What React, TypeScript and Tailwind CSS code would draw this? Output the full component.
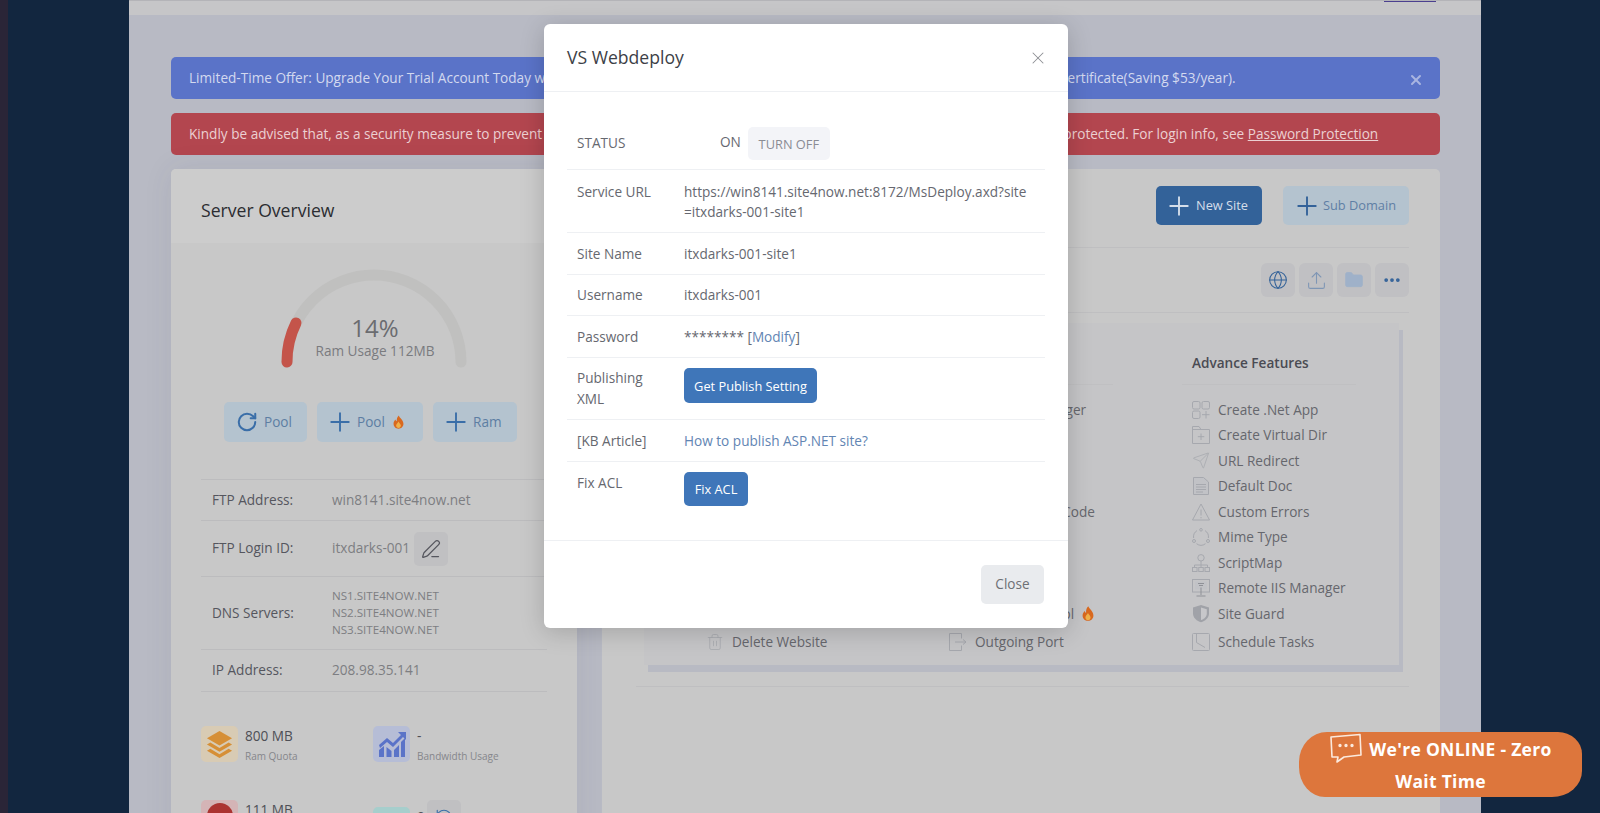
import React from 'react';
import { Globe, RotateCw, Plus, X, Send, Trash2, PenLine, Settings, Database, Lock, Cloud, Code, HardDrive, Link, Key, Archive, List, Clock, Upload, MoreHorizontal, Folder } from 'lucide-react';

const Flame = ({ className = '' }: { className?: string }) => (
  <svg viewBox="0 0 12 15" className={className}>
    <path d="M6.3 0.3C6.8 2.6 11.4 5 11.4 9.4 11.4 12.6 9 14.8 6 14.8 3 14.8 0.6 12.6 0.6 9.4 0.6 7.4 1.7 5.9 2.8 4.9 3 6 3.4 6.6 4.1 6.8 3.9 4.2 4.6 1.8 6.3 0.3Z" fill="#d9691f" />
    <path d="M6 7C6.4 8.4 8.6 9.6 8.6 11.4 8.6 13 7.4 14 6 14 4.6 14 3.4 13 3.4 11.4 3.4 9.6 5.4 8.6 6 7Z" fill="#efb24a" />
  </svg>
);

const S = ({ children }: { children: React.ReactNode }) => (
  <svg viewBox="0 0 18 18" className="h-[18px] w-[18px]" fill="none" stroke="currentColor" strokeWidth="1">
    {children}
  </svg>
);

const CreateApp = () => (
  <S>
    <rect x="0.5" y="0.5" width="7.5" height="7.5" rx="1.5" />
    <rect x="10" y="0.5" width="7.500" height="7.5" rx="1.5" />
    <rect x="0.5" y="10" width="7.5" height="7.500" rx="1.5" />
    <path d="M14 10v7.500M10 13.700h7.500" />
  </S>
);
const VirtualDir = () => (
  <S>
    <path d="M0.5 17.500V0.500H7L9 3.500H17.500V17.500Z" />
    <path d="M0.500 3.500H9M9 7.500v6.500M5.800 10.700h6.500" />
  </S>
);
const Redirect = () => <Send size={21} strokeWidth={1} />;
const Doc = () => (
  <S>
    <path d="M1.500 0.500H11.500L16.500 5V17.500H1.500Z" fill="#c1c2c6" />
    <path d="M4 7.500H14M4 10H14M4 12.500H14M4 15H11" />
  </S>
);
const Warn = () => (
  <S>
    <path d="M9 1 17.500 17H0.500Z" />
    <path d="M9 6.500v6M9 14v1.300" />
  </S>
);
const Mime = () => (
  <S>
    <path d="M5 2.600A7.500 7.500 0 0 0 1.600 10M13 2.600A7.500 7.500 0 0 1 16.400 10M4.500 15.700A7.500 7.500 0 0 0 13.500 15.700" />
    <circle cx="9" cy="1.800" r="1.300" />
    <circle cx="2" cy="13" r="1.500" />
    <circle cx="16" cy="13" r="1.500" />
  </S>
);
const ScriptMap = () => (
  <S>
    <circle cx="9" cy="3.800" r="3.200" />
    <path d="M9 7v4M2.500 13.500V11H15.500V13.500M9 11v2.500" />
    <rect x="0.500" y="13.500" width="4.500" height="4" />
    <rect x="6.750" y="13.500" width="4.500" height="4" />
    <rect x="13" y="13.500" width="4.500" height="4" />
  </S>
);
const Remote = () => (
  <S>
    <rect x="0.500" y="0.500" width="17" height="12.500" />
    <path d="M3 2.500H15V10.500H3Z" fill="#c1c2c6" stroke="none" />
    <path d="M6 4.500H12M7 6.500H11M9 8.500V13M9 13v3M4.500 17H13.500" stroke="#8f9197" />
  </S>
);
const Guard = () => (
  <svg viewBox="0 0 18 18" className="h-[19px] w-[18px]">
    <path d="M9 0.500 17 3V9C17 13.500 13 16.500 9 17.800 5 16.500 1 13.500 1 9V3Z" fill="#a0a2a8" />
    <path d="M9 3 14.800 4.800V9C14.800 12.300 12 14.600 9 15.600Z" fill="#c7c7ca" />
  </svg>
);
const Schedule = () => (
  <S>
    <rect x="0.500" y="0.500" width="17" height="17" rx="1" />
    <path d="M4.500 0.500V9.500L13 14.500" />
  </S>
);
const Outgoing = () => (
  <S>
    <path d="M12.500 5.500V0.500H0.500V17.500H12.500V12.500M6 9H17M14 6.500 17 9 14 11.500" />
  </S>
);
const Trash = () => <Trash2 size={22} strokeWidth={1} />;

const ActionButton = ({ icon, label, flame, className = '' }: { icon: React.ReactNode; label: string; flame?: boolean; className?: string }) => (
  <div className={`flex h-10 items-center rounded-[5px] bg-[#b4c3cf] text-[13.6px] text-[#5d7ea3] ${className}`}>
    {icon}
    <span>{label}</span>
    {flame && <Flame className="ml-[6px] h-[14px] w-[11px]" />}
  </div>
);

const InfoRow = ({ label, children, className = '' }: { label: string; children: React.ReactNode; className?: string }) => (
  <div className={`flex items-center border-b border-[#bcbcbe] pl-[11px] text-[13.6px] ${className}`}>
    <span className="w-[120px] shrink-0 text-[#55565e]">{label}</span>
    <div className="text-[#7d7e82]">{children}</div>
  </div>
);

const Stat = ({ icon, bg, value, label, action }: { icon: React.ReactNode; bg: string; value: string; label: string; action?: boolean }) => (
  <div className="flex w-[172px] gap-[7px]">
    <div className={`flex h-[36px] w-[37px] shrink-0 items-center justify-center rounded-[5px] ${bg}`}>{icon}</div>
    <div className="flex flex-col">
      <div className="flex h-[19px] items-center gap-[2px]">
        <span className="text-[13.6px] leading-[19px] text-[#4e4f56]">{value}</span>
        {action && (
          <span className="flex h-[34px] w-[34px] items-center justify-center rounded-[5px] bg-[#c0c0c2] text-[#3a6ea8]">
            <RotateCw size={18} strokeWidth={1.5} className="-scale-x-100" />
          </span>
        )}
      </div>
      <span className="mt-[3px] text-[10px] leading-[16px] text-[#85868b]">{label}</span>
    </div>
  </div>
);

const Feature = ({ icon, label, flame }: { icon: React.ReactNode; label: string; flame?: boolean }) => (
  <div className="flex h-[25.5px] items-center gap-[8px] pl-[10px] text-[13.6px] text-[#66676d]">
    <span className="flex h-[18px] w-[18px] shrink-0 items-center justify-center text-[#a6a8ae]">{icon}</span>
    <span className="whitespace-nowrap">{label}</span>
    {flame && <Flame className="h-[15px] w-[12px]" />}
  </div>
);

const Column = ({ title, items, w }: { title: string; items: { i: React.ReactNode; t: string; f?: boolean }[]; w: string }) => (
  <div className={`${w} shrink-0`}>
    <div className="w-[174px] border-b border-[#c0c0c2] pb-[11px] pl-[10px] text-[13.6px] font-semibold leading-5 text-[#4a4b53]">{title}</div>
    <div className="mt-[12px]">
      {items.slice(0, 9).map((x) => (
        <Feature key={x.t} icon={x.i} label={x.t} flame={x.f} />
      ))}
      <div className="mt-[3px]">
        <Feature icon={items[9].i} label={items[9].t} />
      </div>
    </div>
  </div>
);

const Ico = (C: React.ComponentType<any>) => <C size={18} strokeWidth={1} />;

const ModalRow = ({ label, children, className = '' }: { label: React.ReactNode; children: React.ReactNode; className?: string }) => (
  <div className={`flex border-b border-[#eef0f3] text-[13.6px] leading-5 ${className}`}>
    <div className="w-[117px] shrink-0 pl-[10px] pr-[30px] text-[#66686f]">{label}</div>
    <div className="min-w-0 flex-1 text-[#666870]">{children}</div>
  </div>
);

export default function App() {
  return (
    <div className="relative flex h-[813px] w-[1600px] overflow-hidden bg-[#12263f] [font-family:'Open_Sans',sans-serif]">
      <div className="w-2 shrink-0 bg-[#2a2537]" />
      <div className="w-[121px] shrink-0" />
      <main className="w-[1352px] shrink-0 bg-[#b8bac4]">
        <div className="flex h-[15px] justify-end border-t border-[#b4b4b8] bg-[#c6c6c8] pr-[45px]">
          <div className="h-px w-[52px] bg-[#4b3f8f]" />
        </div>
        <div className="pl-[42px] pr-[41px] pt-[42px]">
          <div className="relative flex h-[42px] items-center rounded-[5px] bg-[#5a73c8] px-[18px] text-[13.6px] text-[#d3d9ef]">
            Limited-Time Offer: Upgrade Your Trial Account Today with a 50% Discount on Annual Plans, and Get a Free .COM Domain and a Free SSL Certificate(Saving $53/year).
            <X size={16} strokeWidth={3} className="absolute right-[16px] top-[15px] text-[#a9b5e0]" />
          </div>
          <div className="mt-[14px] flex h-[42px] items-center rounded-[5px] bg-[#b3464f] px-[18px] text-[13.6px] text-[#ecd0d2]">
            <span>
              Kindly be advised that, as a security measure to prevent unauthorized access, the site under your newly created account, are all password protected. For login info, see <span className="underline">Password Protection</span>
            </span>
          </div>
          <div className="mt-[14px] flex gap-[25px]">
            <section className="h-[700px] w-[406px] shrink-0 rounded-[5px] bg-[#c8c8c8] shadow-[0_0_30px_rgba(60,60,90,0.08)]">
              <div className="flex h-[74px] items-center rounded-t-[5px] bg-[#cccccc] pl-[30px] pt-[8px] text-[17.6px] text-[#2b2c31]">Server Overview</div>
              <div className="relative h-[220px]">
                <svg viewBox="0 0 196 110" className="absolute left-[105px] top-[20px] h-[110px] w-[196px]">
                  <path d="M11 99A87 87 0 0 1 185 99" fill="none" stroke="#c0c0bf" strokeWidth="11" strokeLinecap="round" />
                  <path d="M11 99A87 87 0 0 1 20 60" fill="none" stroke="#c4544a" strokeWidth="11" strokeLinecap="round" />
                </svg>
                <div className="absolute left-0 top-[71px] w-[406px] pl-[2px] text-center">
                  <div className="text-[24px] leading-[27px] text-[#6b6c70]">14%</div>
                  <div className="text-[13.6px] leading-[20px] text-[#7a7b7f]">Ram Usage 112MB</div>
                </div>
                <div className="absolute left-[53px] top-[159px] flex gap-[10px]">
                  <ActionButton className="w-[83px] gap-[6px] pl-[12px]" icon={<RotateCw size={22} strokeWidth={2.2} className="text-[#3a6ea8]" />} label="Pool" />
                  <ActionButton className="w-[106px] gap-[2px] pl-[8px]" icon={<Plus size={30} strokeWidth={1.5} className="text-[#3a6ea8]" />} label="Pool" flame />
                  <ActionButton className="w-[84px] gap-[2px] pl-[8px]" icon={<Plus size={30} strokeWidth={1.5} className="text-[#3a6ea8]" />} label="Ram" />
                </div>
              </div>
              <div className="mx-[30px] mt-[16px] border-t border-[#bcbcbe]">
                <InfoRow label="FTP Address:" className="h-[41px]">win8141.site4now.net</InfoRow>
                <InfoRow label="FTP Login ID:" className="h-[56px]">
                  <div className="flex items-center gap-[4px]">
                    <span>itxdarks-001</span>
                    <span className="flex h-[34px] w-[34px] items-center justify-center rounded-[5px] bg-[#c0c0c2] text-[#55565e]"><PenLine size={20} strokeWidth={1.5} /></span>
                  </div>
                </InfoRow>
                <InfoRow label="DNS Servers:" className="h-[73px]">
                  <div className="pb-[2px] text-[11.6px] leading-[17px]">
                    <div>NS1.SITE4NOW.NET</div>
                    <div>NS2.SITE4NOW.NET</div>
                    <div>NS3.SITE4NOW.NET</div>
                  </div>
                </InfoRow>
                <InfoRow label="IP Address:" className="h-[42px]">208.98.35.141</InfoRow>
              </div>
              <div className="mx-[30px] mt-[34px] flex flex-col gap-[36px]">
                <div className="flex">
                  <Stat
                    bg="bg-[#d8cbb4]"
                    value="800 MB"
                    label="Ram Quota"
                    icon={
                      <svg viewBox="0 0 28 30" className="h-[29px] w-[27px]" fill="#d68f36">
                        <path d="M14 1 27 8.5 14 16 1 8.5Z" />
                        <path d="M4.5 13 14 18.5 23.500 13 27 15 14 22.500 1 15Z" />
                        <path d="M4.5 19.500 14 25 23.500 19.500 27 21.500 14 29 1 21.500Z" />
                      </svg>
                    }
                  />
                  <Stat
                    bg="bg-[#b6bdd6]"
                    value="-"
                    label="Bandwidth Usage"
                    icon={
                      <svg viewBox="0 0 28 28" className="h-[28px] w-[28px]" fill="#5a73c8">
                        <path d="M1 20l5-4v11H1zM8.500 17l5 4v6h-5zM16 20l5-5v12h-5zM23 12l4-4v19h-4z" />
                        <path d="M1 15 9 8l6 5L23 5l-3-3h8v8l-3-3L15 17 9 12l-7 6Z" />
                      </svg>
                    }
                  />
                </div>
                <div className="flex">
                  <Stat bg="bg-[#d4b4b6]" value="111 MB" label="Disk Usage" icon={<span className="h-[26px] w-[26px] -translate-y-[2px] rounded-full bg-[#ab3331]" />} />
                  <div className="pt-[7px]">
                    <Stat action bg="bg-[#a6cecc]" value="0" label="Databases" icon={<span className="h-[18px] w-[20px] border-2 border-[#3d9c98]" />} />
                  </div>
                </div>
              </div>
            </section>

            <section className="h-[700px] w-[838px] shrink-0 rounded-[5px] bg-[#c8c8c8] pl-[34px] pr-[31px] pt-[17px]">
              <div className="flex justify-end gap-[21px] border-b border-[#bfbfc1] pb-[22px]">
                <div className="flex h-[39px] w-[106px] items-center gap-[2px] rounded-[5px] bg-[#336299] pl-[8px] text-[12.8px] text-[#d5deea]">
                  <Plus size={30} strokeWidth={1.5} />
                  <span>New Site</span>
                </div>
                <div className="flex h-[39px] w-[126px] items-center gap-[1px] rounded-[5px] bg-[#b4c3cf] pl-[9px] text-[12.8px] text-[#5f7fa5]">
                  <Plus size={30} strokeWidth={1.5} className="text-[#336299]" />
                  <span>Sub Domain</span>
                </div>
              </div>
              <div className="flex justify-end gap-[4px] border-b border-[#bfbfc1] pb-[15px] pt-[15px]">
                <span className="flex h-[34px] w-[34px] items-center justify-center rounded-[6px] bg-[#c0c0c3] text-[#336299]"><Globe size={20} strokeWidth={1.25} /></span>
                <span className="flex h-[34px] w-[34px] items-center justify-center rounded-[6px] bg-[#c0c0c3] text-[#7f96b5]"><Upload size={21} strokeWidth={1.25} /></span>
                <span className="flex h-[34px] w-[34px] items-center justify-center rounded-[6px] bg-[#c0c0c3] text-[#9fb1c9]"><Folder size={20} fill="currentColor" strokeWidth={1} /></span>
                <span className="flex h-[34px] w-[34px] items-center justify-center rounded-[6px] bg-[#c0c0c3] text-[#336299]"><MoreHorizontal size={20} strokeWidth={2.5} /></span>
              </div>
              <div className="ml-[8px] mr-[10px] mt-[10px] flex bg-[#c5c5c7] pb-[10px] pl-[52px] pt-[30px] shadow-[4px_7px_0_#b8bac3]">
                <Column
                  w="w-[243px]"
                  title="Site Management"
                  items={[
                    { i: Ico(Settings), t: 'Site Settings' },
                    { i: Ico(Link), t: 'Domain Binding' },
                    { i: Ico(Lock), t: 'SSL Certificate' },
                    { i: Ico(Key), t: 'Folder Permission' },
                    { i: Ico(Archive), t: 'Backup Site' },
                    { i: Ico(List), t: 'Web Logs' },
                    { i: Ico(HardDrive), t: 'Disk Usage' },
                    { i: Ico(Clock), t: 'Stop Website' },
                    { i: Ico(Cloud), t: 'Restart Website' },
                    { i: <Trash />, t: 'Delete Website' },
                  ]}
                />
                <Column
                  w="w-[243px]"
                  title="Tools"
                  items={[
                    { i: Ico(Database), t: 'Account Manager' },
                    { i: Ico(Code), t: 'Web Deploy' },
                    { i: Ico(Code), t: 'Git Deploy' },
                    { i: Ico(Code), t: 'App Pool' },
                    { i: Ico(Code), t: 'HTTPS Status Code' },
                    { i: Ico(Code), t: 'PHP Version' },
                    { i: Ico(Code), t: 'ASP Version' },
                    { i: Ico(Code), t: 'Script Installer' },
                    { i: Ico(Code), t: 'Firewall Control', f: true },
                    { i: <Outgoing />, t: 'Outgoing Port' },
                  ]}
                />
                <Column
                  w="w-[174px]"
                  title="Advance Features"
                  items={[
                    { i: <CreateApp />, t: 'Create .Net App' },
                    { i: <VirtualDir />, t: 'Create Virtual Dir' },
                    { i: <Redirect />, t: 'URL Redirect' },
                    { i: <Doc />, t: 'Default Doc' },
                    { i: <Warn />, t: 'Custom Errors' },
                    { i: <Mime />, t: 'Mime Type' },
                    { i: <ScriptMap />, t: 'ScriptMap' },
                    { i: <Remote />, t: 'Remote IIS Manager' },
                    { i: <Guard />, t: 'Site Guard' },
                    { i: <Schedule />, t: 'Schedule Tasks' },
                  ]}
                />
              </div>
              <div className="mt-[21px] border-b border-[#bfbfc1]" />
            </section>
          </div>
        </div>
      </main>

      <div className="absolute left-[544px] top-[24px] w-[524px] rounded-[6px] bg-white shadow-[0_4px_24px_rgba(0,0,0,0.18)]">
        <div className="flex h-[68px] items-center justify-between border-b border-[#eef0f3] pl-[23px] pr-[20px]">
          <span className="text-[17.6px] text-[#3d3f47]">VS Webdeploy</span>
          <X size={20} strokeWidth={1.25} className="text-[#8d8f94]" />
        </div>
        <div className="px-[23px] pt-[25px]">
          <ModalRow label={<span className="block pt-[16px] leading-5">STATUS</span>} className="h-[53px]">
            <div className="flex items-start gap-[7px] pl-[36px] pt-[10px]">
              <span className="pt-[5px]">ON</span>
              <span className="flex h-[33px] w-[82px] items-center justify-center rounded-[5px] bg-[#f3f4f8] text-[12.8px] text-[#8a8c94]">TURN OFF</span>
            </div>
          </ModalRow>
          <ModalRow label="Service URL" className="pb-[10px] pt-[12px]">
            <div className="w-[347px] break-all">https://win8141.site4now.net:8172/MsDeploy.axd?site=itxdarks-001-site1</div>
          </ModalRow>
          <ModalRow label="Site Name" className="py-[10.5px]">itxdarks-001-site1</ModalRow>
          <ModalRow label="Username" className="py-[10px]">itxdarks-001</ModalRow>
          <ModalRow label="Password" className="py-[10.5px]">
            ******** [<span className="text-[#6285b3]">Modify</span>]
          </ModalRow>
          <ModalRow label={<span className="block leading-[20.5px]">Publishing XML</span>} className="py-[10px]">
            <span className="flex h-[35px] w-[133px] items-center justify-center rounded-[5px] bg-[#3f76b9] text-[12.8px] font-medium text-white">Get Publish Setting</span>
          </ModalRow>
          <ModalRow label="[KB Article]" className="py-[10.5px]">
            <span className="text-[#6285b3]">How to publish ASP.NET site?</span>
          </ModalRow>
          <div className="flex pb-[34px] pt-[10px] text-[13.6px] leading-5">
            <div className="w-[117px] shrink-0 pl-[10px] pt-[1px] text-[#66686f]">Fix ACL</div>
            <span className="flex h-[34px] w-[64px] items-center justify-center rounded-[5px] bg-[#3f76b9] text-[12.8px] font-medium text-white">Fix ACL</span>
          </div>
        </div>
        <div className="flex justify-end border-t border-[#eef0f3] px-[24px] pb-[24px] pt-[24px]">
          <span className="flex h-[39px] w-[63px] items-center justify-center rounded-[5px] bg-[#e9ebee] text-[13.6px] text-[#6e7075]">Close</span>
        </div>
      </div>

      <div className="absolute left-[1299px] top-[732px] flex h-[65px] w-[283px] flex-col items-center rounded-[28px_24px_30px_26px/30px_22px_26px_30px] bg-[#dd763c] font-bold text-white">
        <div className="flex h-[33px] items-center pt-[1px] text-[17.500px]">
          <svg viewBox="0 0 34 30" className="mr-[6px] h-[30px] w-[34px] -translate-y-[1px]" fill="none" stroke="#fbe9dd" strokeWidth="1.6" strokeLinejoin="round">
            <path d="M2 4 31 1.500 32 22 15 24 8 29 9 24 3 24Z" />
            <circle cx="11" cy="12.500" r="0.9" fill="#fbe9dd" />
            <circle cx="17" cy="12.500" r="0.9" fill="#fbe9dd" />
            <circle cx="23" cy="12.500" r="0.9" fill="#fbe9dd" />
          </svg>
          <span className="tracking-[0.3px]">We're ONLINE - Zero</span>
        </div>
        <div className="flex h-[33px] items-center text-[17.500px] tracking-[0.3px]">Wait Time</div>
      </div>
    </div>
  );
}
